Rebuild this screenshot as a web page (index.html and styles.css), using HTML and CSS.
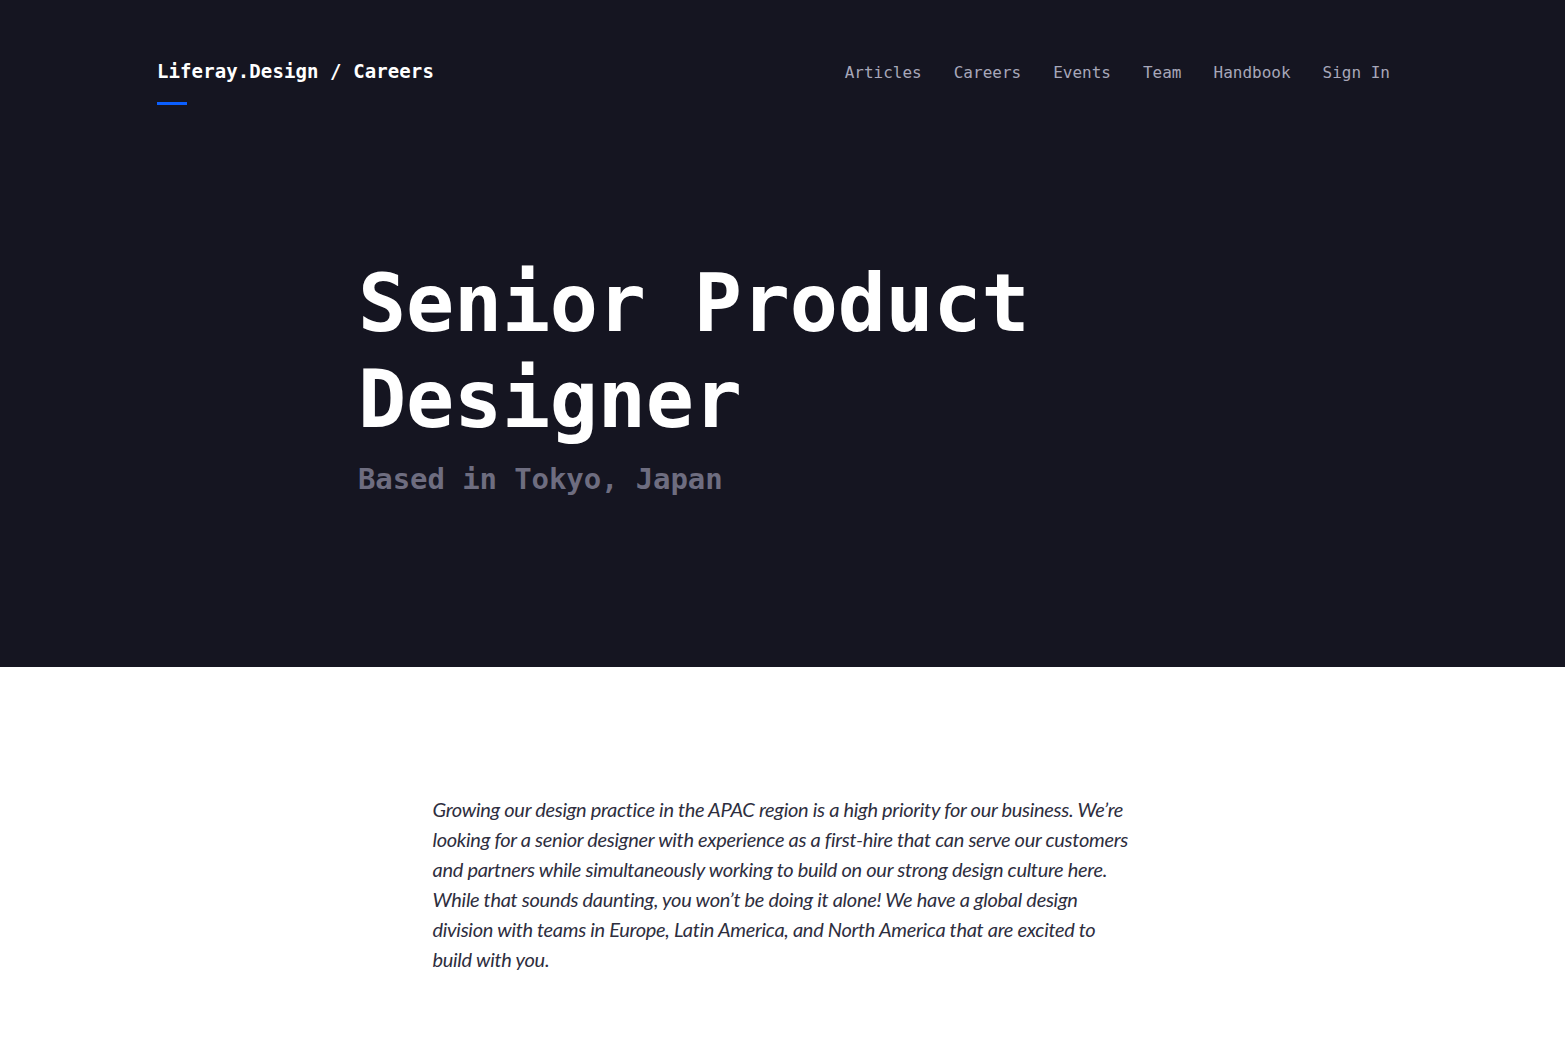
FILE: index.html
```html
<!DOCTYPE html>
<html lang="en">
<head>
<meta charset="utf-8">
<title>Senior Product Designer — Liferay.Design / Careers</title>
<link rel="stylesheet" href="styles.css">
</head>
<body>
<div class="hero">
  <header class="topbar">
    <a class="brand" href="#">Liferay.Design / Careers</a>
    <nav class="nav">
      <a href="#">Articles</a>
      <a href="#">Careers</a>
      <a href="#">Events</a>
      <a href="#">Team</a>
      <a href="#">Handbook</a>
      <a href="#">Sign In</a>
    </nav>
  </header>
  <div class="hero-body">
    <h1 class="title">Senior Product Designer</h1>
    <p class="subtitle">Based in Tokyo, Japan</p>
  </div>
</div>
<main class="content">
  <p class="intro">Growing our design practice in the APAC region is a high priority for our business. We’re looking for a senior designer with experience as a first-hire that can serve our customers and partners while simultaneously working to build on our strong design culture here. While that sounds daunting, you won’t be doing it alone! We have a global design division with teams in Europe, Latin America, and North America that are excited to build with you.</p>
</main>
</body>
</html>
```
FILE: styles.css
```css
html, body {
  margin: 0;
  padding: 0;
  background: #ffffff;
}
.hero {
  background: #151521;
  height: 667px;
  box-sizing: border-box;
}
.topbar {
  display: flex;
  justify-content: space-between;
  align-items: flex-start;
  padding: 58px 175px 0 157px;
  font-family: "DejaVu Sans Mono", "Liberation Mono", monospace;
}
.brand {
  color: #ffffff;
  font-weight: bold;
  font-size: 19px;
  line-height: 26px;
  text-decoration: none;
  position: relative;
  letter-spacing: 0.1px;
}
.brand::after {
  content: "";
  position: absolute;
  left: 0;
  top: 44px;
  width: 30px;
  height: 3px;
  background: #0b5fff;
}
.nav {
  display: flex;
  gap: 32px;
  padding-top: 3px;
}
.nav a {
  color: #a7a7b9;
  font-size: 16px;
  line-height: 24px;
  text-decoration: none;
  letter-spacing: 0;
}
.hero-body {
  padding: 171px 0 0 358px;
  font-family: "DejaVu Sans Mono", "Liberation Mono", monospace;
}
.title {
  margin: 0;
  color: #ffffff;
  font-size: 80px;
  line-height: 96px;
  font-weight: bold;
  max-width: 720px;
  letter-spacing: -0.2px;
}
.subtitle {
  margin: 13px 0 0 0;
  color: #6e6d80;
  font-size: 29px;
  line-height: 36px;
  font-weight: bold;
  letter-spacing: -0.1px;
}
.content {
  padding: 127px 0 60px;
}
.intro {
  max-width: 700px;
  margin: 0 auto;
  font-family: Lato, "Open Sans", sans-serif;
  font-style: italic;
  font-size: 20px;
  line-height: 30px;
  letter-spacing: -0.3px;
  color: #2e2e3e;
}
```
